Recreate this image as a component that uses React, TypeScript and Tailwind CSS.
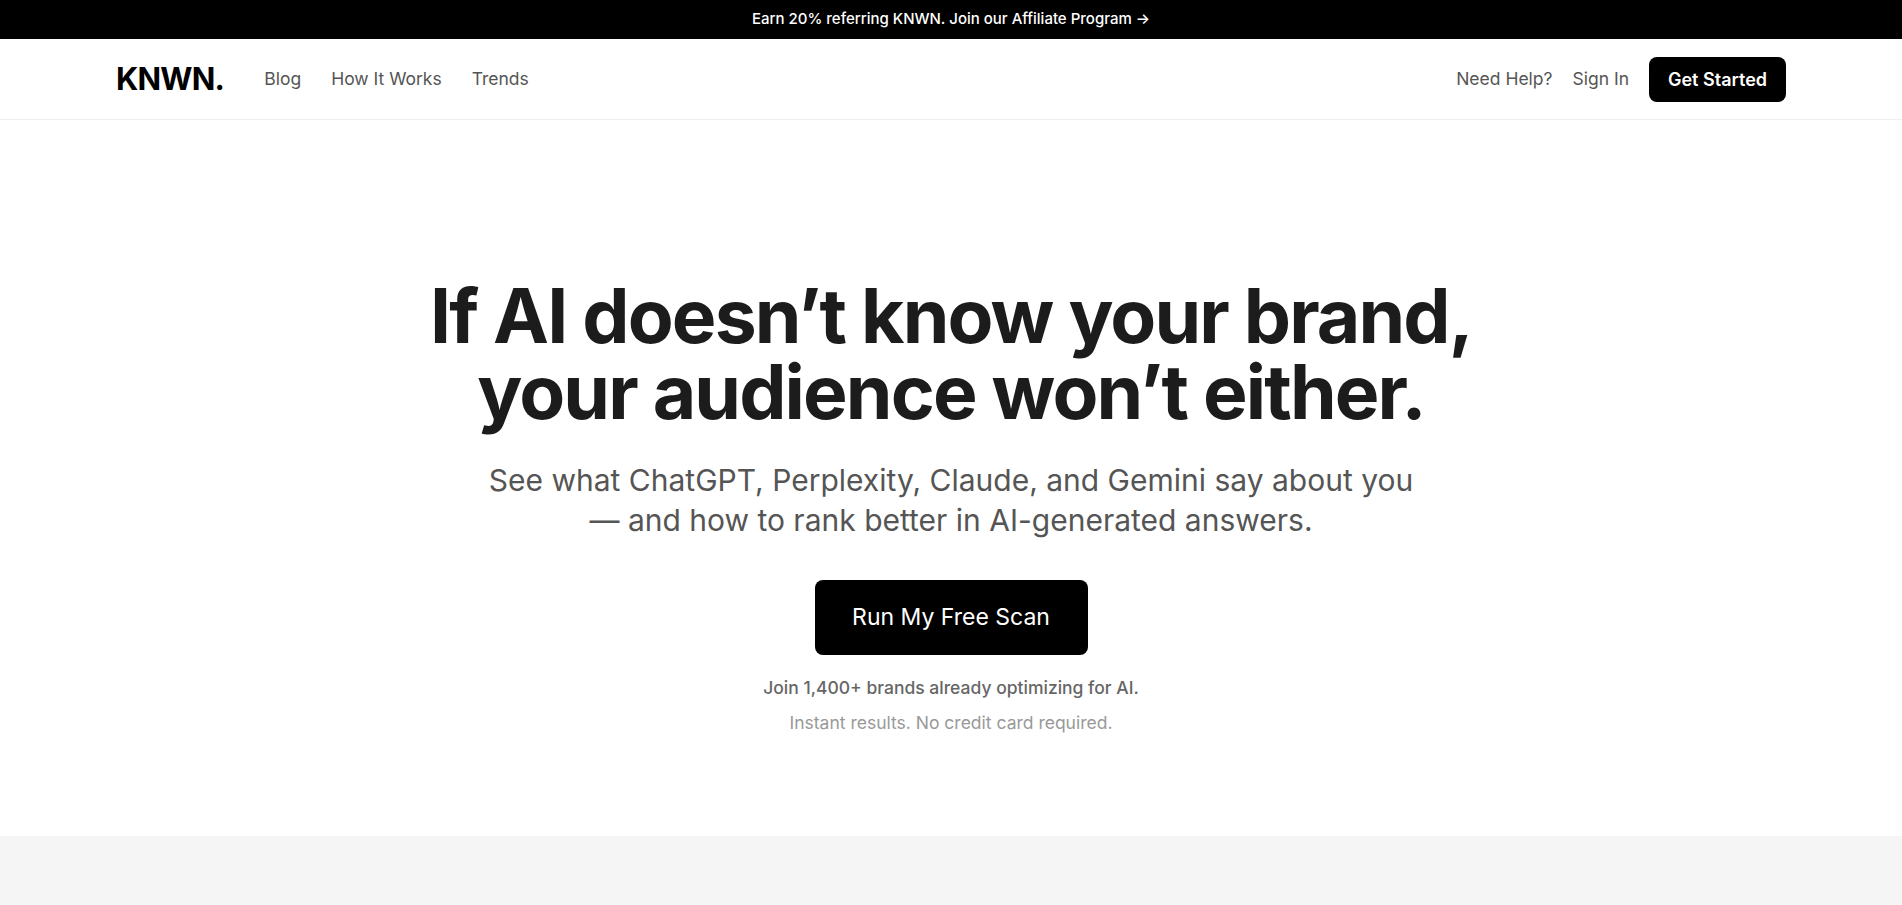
import React from "react";

const App = () => {
  return (
    <div className="min-h-screen bg-white font-['Inter',sans-serif]">
      {/* Announcement */}
      <div className="flex h-[39px] items-center justify-center bg-black">
        <a href="#" className="text-[15px] font-medium text-white">
          Earn 20% referring KNWN. Join our Affiliate Program →
        </a>
      </div>

      {/* Nav */}
      <header className="border-b border-[#efefef]">
        <div className="flex h-[80px] items-center justify-between px-[116px]">
          <div className="flex items-center">
            <span className="text-[31px] font-bold tracking-tight text-black">KNWN.</span>
            <nav className="ml-[40px] flex items-center gap-[30px] text-[17.5px] text-[#555]">
              <a href="#">Blog</a>
              <a href="#">How It Works</a>
              <a href="#">Trends</a>
            </nav>
          </div>
          <div className="flex items-center gap-[20px] text-[17.5px] text-[#555]">
            <a href="#">Need Help?</a>
            <a href="#">Sign In</a>
            <a
              href="#"
              className="flex h-[45px] w-[137px] items-center justify-center rounded-lg bg-black text-[18px] font-semibold text-white"
            >
              Get Started
            </a>
          </div>
        </div>
      </header>

      {/* Hero */}
      <section className="flex flex-col items-center pt-[158px] pb-[100px] text-center">
        <h1 className="text-[75px] font-bold leading-[76px] tracking-tight text-[#1c1c1c]">
          If AI doesn’t know your brand,
          <br />
          your audience won’t either.
        </h1>
        <p className="mt-[30px] text-[30px] leading-[40px] text-[#555]">
          See what ChatGPT, Perplexity, Claude, and Gemini say about you
          <br />— and how to rank better in AI-generated answers.
        </p>
        <a
          href="#"
          className="mt-[40px] flex h-[75px] w-[273px] items-center justify-center rounded-lg bg-black text-[23px] text-white"
        >
          Run My Free Scan
        </a>
        <p className="mt-[20px] text-[17.5px] leading-[26px] font-medium text-[#666]">
          Join 1,400+ brands already optimizing for AI.
        </p>
        <p className="mt-[9px] text-[17.5px] leading-[26px] text-[#999]">
          Instant results. No credit card required.
        </p>
      </section>

      {/* Next section */}
      <section className="h-[300px] bg-[#f5f5f5]" />
    </div>
  );
};

export default App;
